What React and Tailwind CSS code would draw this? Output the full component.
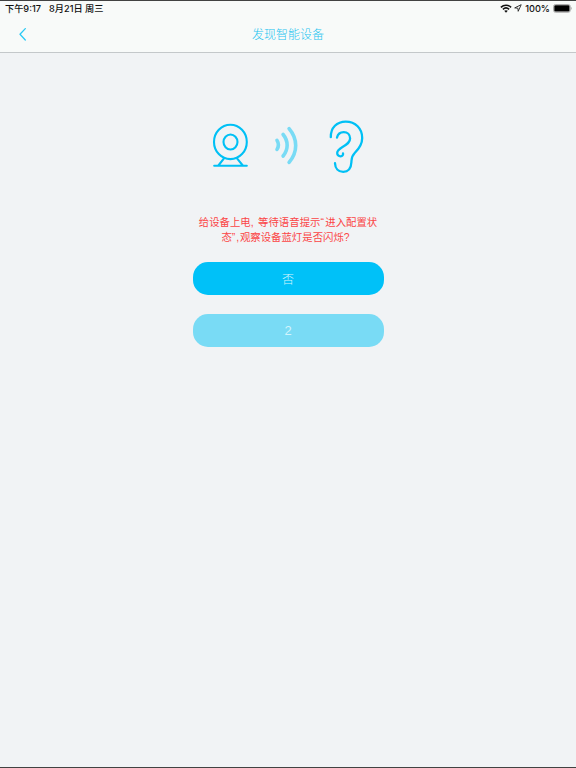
import { useState } from 'react'

function WifiIcon() {
  return (
    <svg width="12" height="9" viewBox="0 0 12 9" fill="none" stroke="#111" strokeWidth="1.6">
      <path d="M0.9 3.3C3.8 0.6 8.2 0.6 11.1 3.3" />
      <path d="M2.9 5.3C4.7 3.7 7.3 3.7 9.1 5.3" />
      <path d="M4.2 6.8C5.2 5.9 6.8 5.9 7.8 6.8L6 8.7Z" fill="#111" stroke="none" />
    </svg>
  )
}

function LocationIcon() {
  return (
    <svg width="8" height="8" viewBox="0 0 8 8" fill="none" stroke="#222" strokeWidth="0.9" strokeLinejoin="round">
      <path d="M7.2 0.7L0.7 3.9L3.9 4.2L4.2 7.3Z" />
    </svg>
  )
}

function BatteryIcon() {
  return (
    <svg width="20" height="9" viewBox="0 0 20 9">
      <rect x="0.5" y="0.5" width="16.8" height="7.8" rx="2" fill="none" stroke="#999" strokeWidth="0.8" />
      <rect x="1.3" y="1.3" width="15.2" height="6.2" rx="1.2" fill="#000" />
      <path d="M18.1 3V5.8C19 5.4 19 3.4 18.1 3Z" fill="#999" />
    </svg>
  )
}

function CameraIcon() {
  return (
    <svg width="36" height="48" viewBox="212 122 36 48" fill="none" stroke="#00c0f5" strokeWidth="2.1" strokeLinecap="round">
      <ellipse cx="230.4" cy="141.9" rx="16.4" ry="17.2" />
      <ellipse cx="230.5" cy="142" rx="7" ry="7.5" />
      <path d="M214.2 165.8H246.8M223.8 158.7L218.4 165.5M237.2 158.7L242.8 165.5" />
    </svg>
  )
}

function WaveIcon() {
  return (
    <svg width="26" height="42" viewBox="273 124 26 42" fill="none" stroke="#79dbf5" strokeWidth="3.6" strokeLinecap="round">
      <path d="M277 140.4C278.8 143.3 278.8 146.6 277 149.4" />
      <path d="M283.1 134.5C288.5 141 288.5 149.5 283.1 156" />
      <path d="M289.1 128.6C297.9 139 297.9 152 289.1 162.4" />
    </svg>
  )
}

function EarIcon() {
  return (
    <svg width="38" height="56" viewBox="328 119 38 56" fill="none" stroke="#00c0f5" strokeWidth="2.3" strokeLinecap="round">
      <path d="M330.8 137.2C330.6 127.5 337 121.6 345.7 121.6C355.5 121.6 362.2 128.4 362.2 138C362.2 144.6 358.7 149 354.9 152.7C351.2 156.3 351.6 158.8 351.4 162.3C351.1 168 348.2 171.8 343.2 171.8C338.3 171.8 335.2 168.3 335 163.2" />
      <path d="M337 137.6C337.8 134.2 340.5 132.1 343.7 132.1C347.3 132.1 350.1 134.7 350.1 138.5C350.1 142.3 347.3 144.2 342.5 147C338.9 149.2 337.2 150.8 337.2 152.9C337.2 155.1 338.8 156.4 340.6 156.3C342.5 156.2 343.4 154.8 343 153.3" />
    </svg>
  )
}

export default function App() {
  const [count] = useState(2)

  return (
    <div className="flex h-[768px] w-[576px] flex-col border-y border-[#424242] bg-[#f1f3f5] font-['Liberation_Sans','Noto_Sans_CJK_SC',sans-serif]">
      <header className="h-[52px] shrink-0 border-b border-[#c4c8ca] bg-[#f8faf9]">
        <div className="flex h-[15px] items-center justify-between pl-[5px] pr-[3px] text-[9.2px] font-medium text-[#111] font-['Inter','Noto_Sans_CJK_SC',sans-serif]">
          <div className="flex gap-[8px] whitespace-nowrap">
            <span>下午9:17</span>
            <span>8月21日 周三</span>
          </div>
          <div className="flex items-center">
            <WifiIcon />
            <span className="ml-[2px]"><LocationIcon /></span>
            <span className="ml-[3px] mr-[3px]">100%</span>
            <BatteryIcon />
          </div>
        </div>
        <div className="grid h-[36px] grid-cols-3 items-center">
          <button className="ml-[18px] flex w-4" aria-label="返回">
            <svg width="9" height="14" viewBox="0 0 9 14" fill="none" stroke="#2bcaf5" strokeWidth="1.3" strokeLinecap="round" strokeLinejoin="round">
              <path d="M7.3 1.6L2 7.3L7.3 13" />
            </svg>
          </button>
          <h1 className="pt-[2px] text-center text-[12px] font-light text-[#1cc4f0]">发现智能设备</h1>
        </div>
      </header>

      <main className="flex flex-col items-center pt-[66px]">
        <div className="ml-[2px] flex items-start">
          <div className="pt-[3px]"><CameraIcon /></div>
          <div className="ml-[25px] mr-[29px] pt-[5px]"><WaveIcon /></div>
          <EarIcon />
        </div>
        <p className="mt-[40px] whitespace-nowrap text-center text-[10.4px] leading-[15px] text-[#fb4545] [word-spacing:1.6px]">
          给设备上电, 等待语音提示<span className="tracking-[1.4px]">“</span>进入配置状<br />
          态<span className="tracking-[0.9px]">”,</span><span className="mr-[5px]">观察设备蓝灯是否闪烁?</span>
        </p>
        <button className="mt-[17px] h-[33px] w-[191px] rounded-[15px] bg-[#00c1f8] pt-[2px] text-[12px] font-light text-[#d5f5fd]">否</button>
        <button className="mt-[19px] h-[33px] w-[191px] rounded-[15px] bg-[#79dbf5] text-[13px] text-[#d3f4fc]">{count}</button>
      </main>
    </div>
  )
}
